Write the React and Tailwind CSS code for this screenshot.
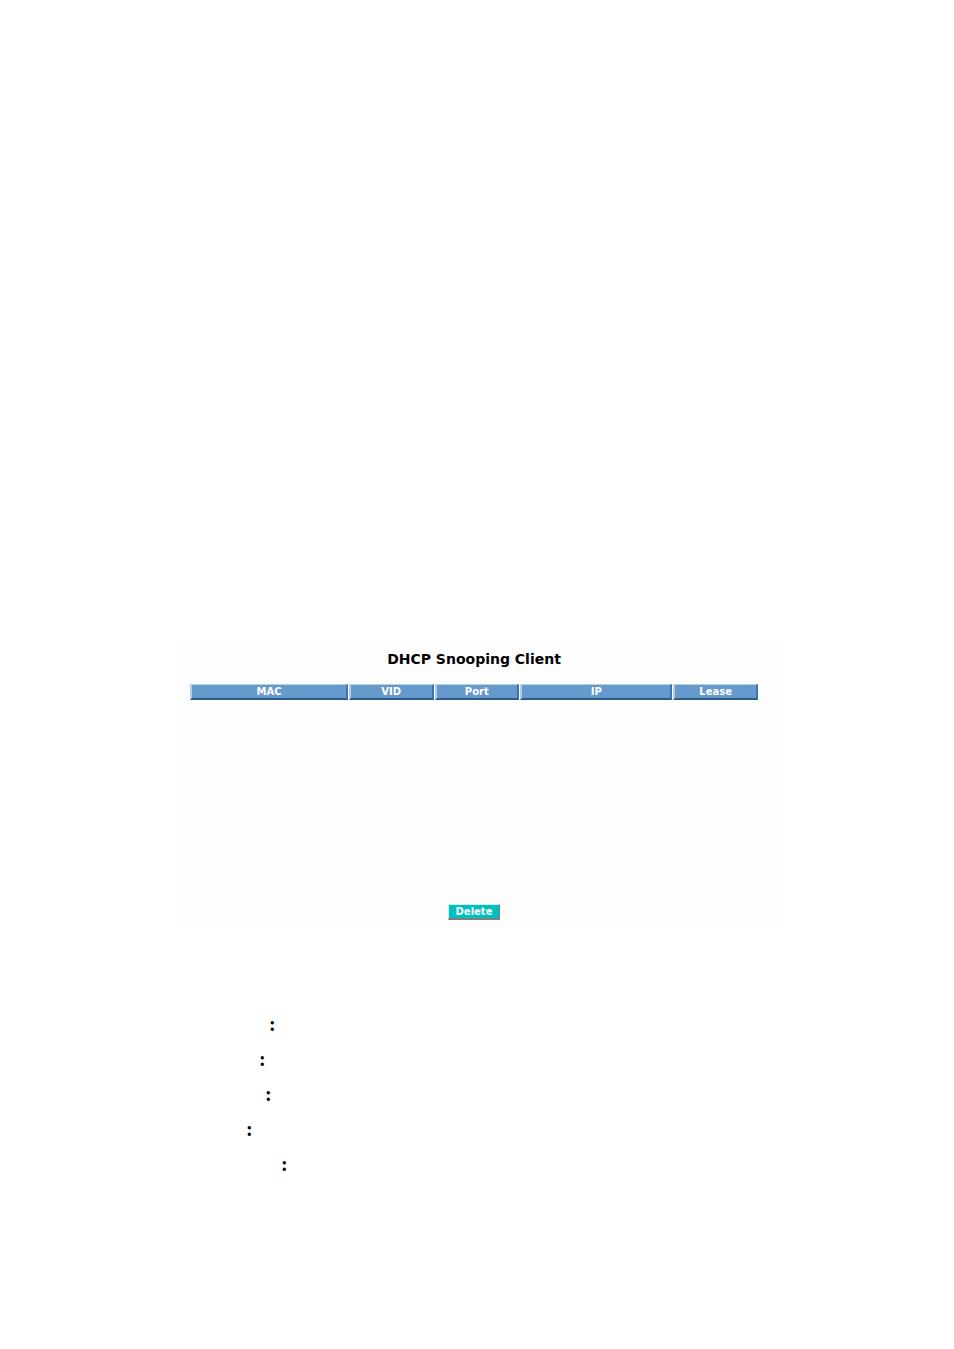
const columns = [
  { name: "MAC", width: "w-[28%]" },
  { name: "VID", width: "w-[15%]" },
  { name: "Port", width: "w-[15%]" },
  { name: "IP", width: "w-[27%]" },
  { name: "Lease", width: "w-[15%]" },
];

const indents = ["pl-[93px]", "pl-[83px]", "pl-[89px]", "pl-[70px]", "pl-[105px]"];

export default function App() {
  return (
    <div className="min-h-screen bg-white pt-[641px] pb-40 text-black">
      <main className="mx-auto w-full max-w-[602px]">
        <section className="bg-[#fdfdfd] pt-2 pr-[19px] pb-[7px] pl-[13px] font-['DejaVu_Sans',sans-serif]">
          <h1 className="text-center text-[14px] leading-5 font-bold">DHCP Snooping Client</h1>

          <div className="mt-[15px] h-[220px]">
            <table className="w-full table-fixed border-separate border-spacing-x-px border-spacing-y-0 text-[10px] leading-[13px] text-white">
              <thead>
                <tr>
                  {columns.map((col) => (
                    <th
                      key={col.name}
                      className={`${col.width} border-t border-r-2 border-b-2 border-l-2 border-t-[#b7cfe6] border-r-[#3a75b0] border-b-[#2b5b8a] border-l-[#b4cde6] bg-[#6699cc] p-0 text-center font-bold`}
                    >
                      {col.name}
                    </th>
                  ))}
                </tr>
              </thead>
            </table>
          </div>

          <div className="flex justify-center">
            <button
              type="button"
              className="h-4 w-[52px] border-t border-r border-b-2 border-l border-t-[#d8ece8] border-r-[#808080] border-b-[#808080] border-l-[#d8ece8] bg-[#00c0c0] text-[10px] leading-[13px] font-bold text-white"
            >
              Delete
            </button>
          </div>
        </section>

        <ul className="mt-20 font-['Liberation_Serif',serif] text-[20px] leading-[35px] font-bold">
          {indents.map((indent) => (
            <li key={indent} className={indent}>
              :
            </li>
          ))}
        </ul>
      </main>
    </div>
  );
}
